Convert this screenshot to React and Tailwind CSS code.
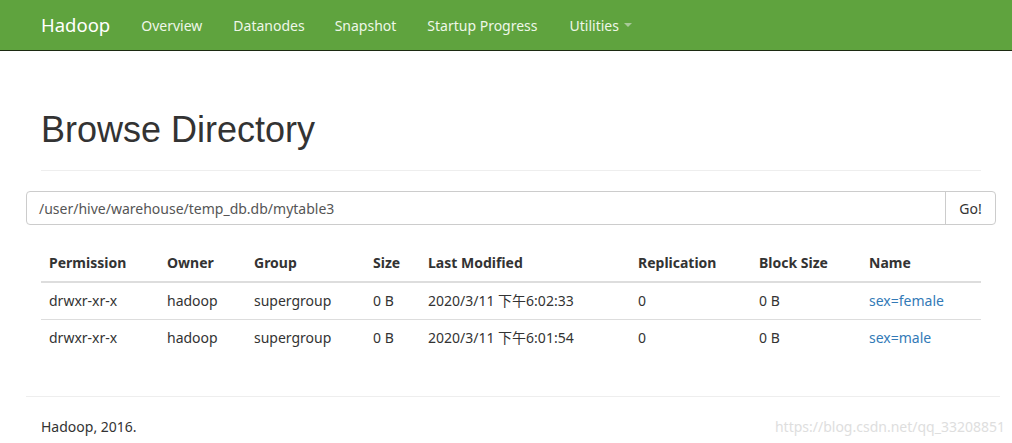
export default function App() {
  const rows = [
    ["drwxr-xr-x", "hadoop", "supergroup", "0 B", "2020/3/11 下午6:02:33", "0", "0 B", "sex=female"],
    ["drwxr-xr-x", "hadoop", "supergroup", "0 B", "2020/3/11 下午6:01:54", "0", "0 B", "sex=male"],
  ];
  const heads = ["Permission", "Owner", "Group", "Size", "Last Modified", "Replication", "Block Size", "Name"];
  const widths = ["w-[118px]", "w-[87px]", "w-[119px]", "w-[55px]", "w-[210px]", "w-[121px]", "w-[110px]", "w-[120px]"];
  return (
    <div className="w-[1012px] h-[443px] bg-white overflow-hidden text-[14px] text-[#333]" style={{ fontFamily: '"Noto Sans", "Noto Sans CJK SC", sans-serif' }}>
      <nav className="h-[51px] bg-[#5fa33e] border-b border-[#1c2a12] flex items-center pl-[41px] text-white">
        <span className="text-[18.5px] mr-[31px]">Hadoop</span>
        <div className="flex items-center text-[#eef7e8]">
          <span className="mr-[31px]">Overview</span>
          <span className="mr-[30px]">Datanodes</span>
          <span className="mr-[31px]">Snapshot</span>
          <span className="mr-[32px]">Startup Progress</span>
          <span className="flex items-center">Utilities
            <span className="ml-[5px] w-0 h-0 border-l-[4px] border-r-[4px] border-t-[4px] border-l-transparent border-r-transparent border-t-[#a9c99a]"></span>
          </span>
        </div>
      </nav>
      <div className="px-[26px]">
        <div className="mx-[15px] w-[940px] mt-[59px] pb-[20px] border-b border-[#eee]">
          <h1 className="text-[36px] leading-[40px] text-[#333]" style={{ fontFamily: '"Liberation Sans", Arial, sans-serif' }}>Browse Directory</h1>
        </div>
        <div className="mt-[20px] flex h-[34px] w-[970px] border border-[#ccc] rounded-[4px]">
          <div className="flex-1 flex items-center pl-[12px] text-[#555]">/user/hive/warehouse/temp_db.db/mytable3</div>
          <div className="w-[50px] border-l border-[#ccc] flex items-center justify-center text-[#333]">Go!</div>
        </div>
        <table className="mx-[15px] mt-[19px] w-[940px] border-collapse table-fixed">
          <thead>
            <tr className="border-b-2 border-[#ddd]">
              {heads.map((h, i) => (
                <th key={h} className={`${widths[i]} text-left font-bold px-[8px] h-[38px] leading-[20px]`}>{h}</th>
              ))}
            </tr>
          </thead>
          <tbody>
            {rows.map((r, ri) => (
              <tr key={ri} className={ri === 0 ? "border-b border-[#ddd]" : ""}>
                {r.map((c, i) => (
                  <td key={i} className={`px-[8px] h-[37px] leading-[20px] ${i === 7 ? "text-[#337ab7]" : ""}`}>{c}</td>
                ))}
              </tr>
            ))}
          </tbody>
        </table>
        <div className="mt-[40px] border-t border-[#eee] w-[974px]"></div>
        <div className="flex items-center justify-between mt-[19px] pl-[15px]">
          <span className="text-[14px]">Hadoop, 2016.</span>
          <span className="text-[14px] text-[#dedede] mr-[-19px]">https://blog.csdn.net/qq_33208851</span>
        </div>
      </div>
    </div>
  );
}
